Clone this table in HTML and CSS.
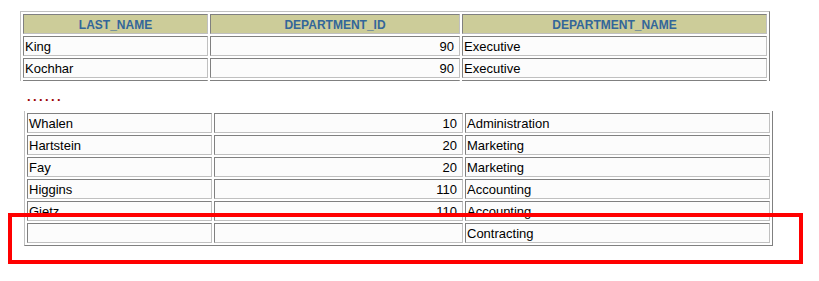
FILE: index.html
```html
<!DOCTYPE html>
<html>
<head>
<meta charset="utf-8">
<link rel="stylesheet" href="styles.css">
</head>
<body>
<div class="page">
  <div class="clip-top">
    <table class="grid grid-top">
      <tr>
        <th class="c1">LAST_NAME</th>
        <th class="c2">DEPARTMENT_ID</th>
        <th class="c3">DEPARTMENT_NAME</th>
      </tr>
      <tr><td>King</td><td class="num">90</td><td>Executive</td></tr>
      <tr><td>Kochhar</td><td class="num">90</td><td>Executive</td></tr>
      <tr><td></td><td class="num"></td><td></td></tr>
    </table>
  </div>
  <div class="dots">......</div>
  <table class="grid grid-bottom">
    <tr><td class="c1">Whalen</td><td class="c2b num">10</td><td class="c3">Administration</td></tr>
    <tr><td>Hartstein</td><td class="num">20</td><td>Marketing</td></tr>
    <tr><td>Fay</td><td class="num">20</td><td>Marketing</td></tr>
    <tr><td>Higgins</td><td class="num">110</td><td>Accounting</td></tr>
    <tr><td>Gietz</td><td class="num">110</td><td>Accounting</td></tr>
    <tr><td></td><td class="num"></td><td>Contracting</td></tr>
  </table>
  <div class="highlight"></div>
</div>
</body>
</html>
```

FILE: styles.css
```css
html, body {
  margin: 0;
  padding: 0;
  background: #ffffff;
}

.page {
  position: relative;
  width: 819px;
  height: 281px;
  padding-top: 11px;
  box-sizing: border-box;
  font-family: "Liberation Sans", Arial, sans-serif;
}

.clip-top {
  margin-left: 20px;
  height: 70px;
  overflow: hidden;
}

.grid {
  border-collapse: separate;
  border-spacing: 2px;
  table-layout: fixed;
}

.grid-top {
  width: 750px;
  border-top: 1px solid #c0c0c0;
  border-left: 1px solid #c0c0c0;
  border-right: 1px solid #808080;
}

.grid-bottom {
  margin-left: 24px;
  width: 749px;
  border-left: 1px solid #c0c0c0;
  border-right: 1px solid #808080;
  border-bottom: 1px solid #808080;
}

.grid th,
.grid td {
  box-sizing: border-box;
  height: 20px;
  border-top: 1px solid #808080;
  border-left: 1px solid #808080;
  border-right: 1px solid #c0c0c0;
  border-bottom: 1px solid #c0c0c0;
  padding: 2px 1px 0 1px;
  white-space: nowrap;
  overflow: hidden;
  vertical-align: top;
}

.grid th {
  background: #cccc99;
  color: #336699;
  font-size: 12px;
  font-weight: bold;
  line-height: 16px;
  text-align: center;
}

.grid td {
  background: #fcfcfc;
  color: #000000;
  font-size: 13px;
  line-height: 16px;
  text-align: left;
}

.grid td.num {
  text-align: right;
  padding-right: 5px;
}

.c1 { width: 185px; }
.c2 { width: 250px; }
.c2b { width: 249px; }
.c3 { width: 305px; }

.dots {
  height: 30px;
  box-sizing: border-box;
  padding-top: 9px;
  margin-left: 27px;
  color: #990000;
  font-size: 13px;
  font-weight: bold;
  line-height: 13px;
  letter-spacing: 2.4px;
}

.highlight {
  position: absolute;
  left: 8px;
  top: 213px;
  width: 795px;
  height: 51px;
  box-sizing: border-box;
  border: 4px solid #ff0000;
}
```
